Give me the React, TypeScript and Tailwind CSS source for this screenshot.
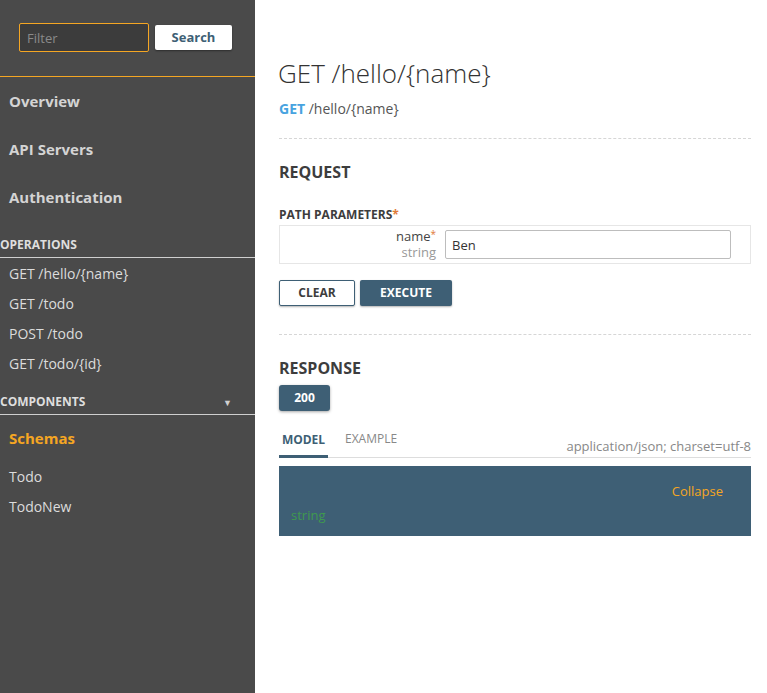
import React from 'react';

const navTop = ['Overview', 'API Servers', 'Authentication'];
const operations = ['GET /hello/{name}', 'GET /todo', 'POST /todo', 'GET /todo/{id}'];
const schemas = ['Todo', 'TodoNew'];

function Sidebar() {
  return (
    <aside className="w-[255px] shrink-0 bg-[#4a4a4a] min-h-screen">
      {/* filter + search */}
      <div className="h-[77px] border-b border-[#f5a623] flex items-start pt-[23px] pl-[19px] gap-[6px]">
        <input
          placeholder="Filter"
          className="w-[130px] h-[29px] bg-[#3c3c3c] border border-[#f5a623] rounded-[2px] px-[7px] text-[13px] text-[#ccc] placeholder-[#8a8a8a] outline-none"
        />
        <button className="mt-[2px] w-[77px] h-[25px] bg-white rounded-[2px] text-[13px] font-bold text-[#3e5f75] shadow-[0_1px_2px_rgba(0,0,0,0.4)]">
          Search
        </button>
      </div>

      {navTop.map((item) => (
        <div key={item} className="h-[48px] flex items-center pl-[9px] text-[15px] font-bold text-[#d4d4d4]">
          {item}
        </div>
      ))}

      <div className="h-[37px] border-b border-[#cfcfcf] flex items-end pb-[3px] text-[12px] font-bold text-[#dedede]">
        OPERATIONS
      </div>
      {operations.map((op) => (
        <div key={op} className="h-[30px] flex items-center pl-[9px] text-[14px] text-[#dcdcdc]">
          {op}
        </div>
      ))}

      <div className="h-[37px] border-b border-[#cfcfcf] flex items-end justify-between pb-[3px] pr-[23px] text-[12px] font-bold text-[#dedede]">
        <span>COMPONENTS</span>
        <span className="text-[9px] text-[#d0d0d0] pb-[2px]">▼</span>
      </div>
      <div className="h-[46px] flex items-center pl-[9px] text-[15px] font-bold text-[#f5a623]">Schemas</div>
      {schemas.map((s) => (
        <div key={s} className="h-[30px] flex items-center pl-[9px] text-[14px] text-[#dcdcdc]">
          {s}
        </div>
      ))}
    </aside>
  );
}

function Dashed() {
  return <div className="border-t border-dashed border-[#d6d6d6]" />;
}

export default function App() {
  return (
    <div className="flex min-h-screen bg-white font-['Open_Sans',sans-serif]">
      <Sidebar />
      <main className="flex-1 pl-[24px] pr-[16px]">
        <h1 className="mt-[57px] -ml-[1px] text-[26px] leading-[32px] font-light text-[#333]">GET /hello/{'{name}'}</h1>
        <div className="mt-[11px] text-[14px] leading-[18px] text-[#555]">
          <span className="font-bold text-[#47a3e0]">GET</span> /hello/{'{name}'}
        </div>
        <div className="mt-[20px]">
          <Dashed />
        </div>

        <h2 className="mt-[23px] text-[16px] leading-[20px] font-bold text-[#3d3d3d]">REQUEST</h2>
        <div className="mt-[26px] text-[12px] leading-[14px] font-bold text-[#3d3d3d]">
          PATH PARAMETERS<span className="text-[#e07b39]">*</span>
        </div>
        <div className="mt-[3px] border border-[#e6e6e6] h-[39px] flex items-center">
          <div className="w-[156px] flex flex-col items-end gap-[1px] text-[13px] leading-[15px]">
            <div className="flex items-start text-[#444]">
              <span>name</span>
              <span className="text-[#e07b39] text-[10px] leading-[10px]">*</span>
            </div>
            <div className="text-[#999]">string</div>
          </div>
          <input
            defaultValue="Ben"
            className="ml-[9px] w-[286px] h-[29px] border border-[#bdbdbd] rounded-[2px] px-[6px] text-[13px] text-[#333] outline-none"
          />
        </div>
        <div className="mt-[16px] flex gap-[5px]">
          <button className="w-[76px] h-[26px] bg-white border border-[#3e5f75] rounded-[2px] text-[12px] font-bold text-[#3d3d3d] shadow-[0_1px_2px_rgba(0,0,0,0.3)]">
            CLEAR
          </button>
          <button className="w-[92px] h-[26px] bg-[#3e5f75] rounded-[2px] text-[12px] font-bold text-white shadow-[0_1px_2px_rgba(0,0,0,0.3)]">
            EXECUTE
          </button>
        </div>
        <div className="mt-[28px]">
          <Dashed />
        </div>

        <h2 className="mt-[23px] text-[16px] leading-[20px] font-bold text-[#3d3d3d]">RESPONSE</h2>
        <div className="mt-[7px] w-[51px] h-[26px] bg-[#3e5f75] rounded-[3px] flex items-center justify-center text-[12px] font-bold text-white shadow-[0_1px_3px_rgba(0,0,0,0.35)]">
          200
        </div>

        <div className="mt-[19px] flex items-end border-b border-[#dddddd]">
          <div className="w-[49px] pb-[6px] border-b-[3px] border-[#3e5f75] -mb-[1px] text-[12px] font-bold text-[#3e5f75] text-center">MODEL</div>
          <div className="ml-[17px] pb-[9px] text-[12px] text-[#888]">EXAMPLE</div>
          <div className="ml-auto pb-[1px] text-[13px] text-[#888]">application/json; charset=utf-8</div>
        </div>
        <div className="mt-[8px] h-[70px] bg-[#3e5f75] relative">
          <div className="absolute right-[28px] top-[16px] text-[13px] text-[#f5a623]">Collapse</div>
          <div className="absolute left-[12px] top-[40px] text-[13px] text-[#3f9a4f]">string</div>
        </div>
      </main>
    </div>
  );
}
